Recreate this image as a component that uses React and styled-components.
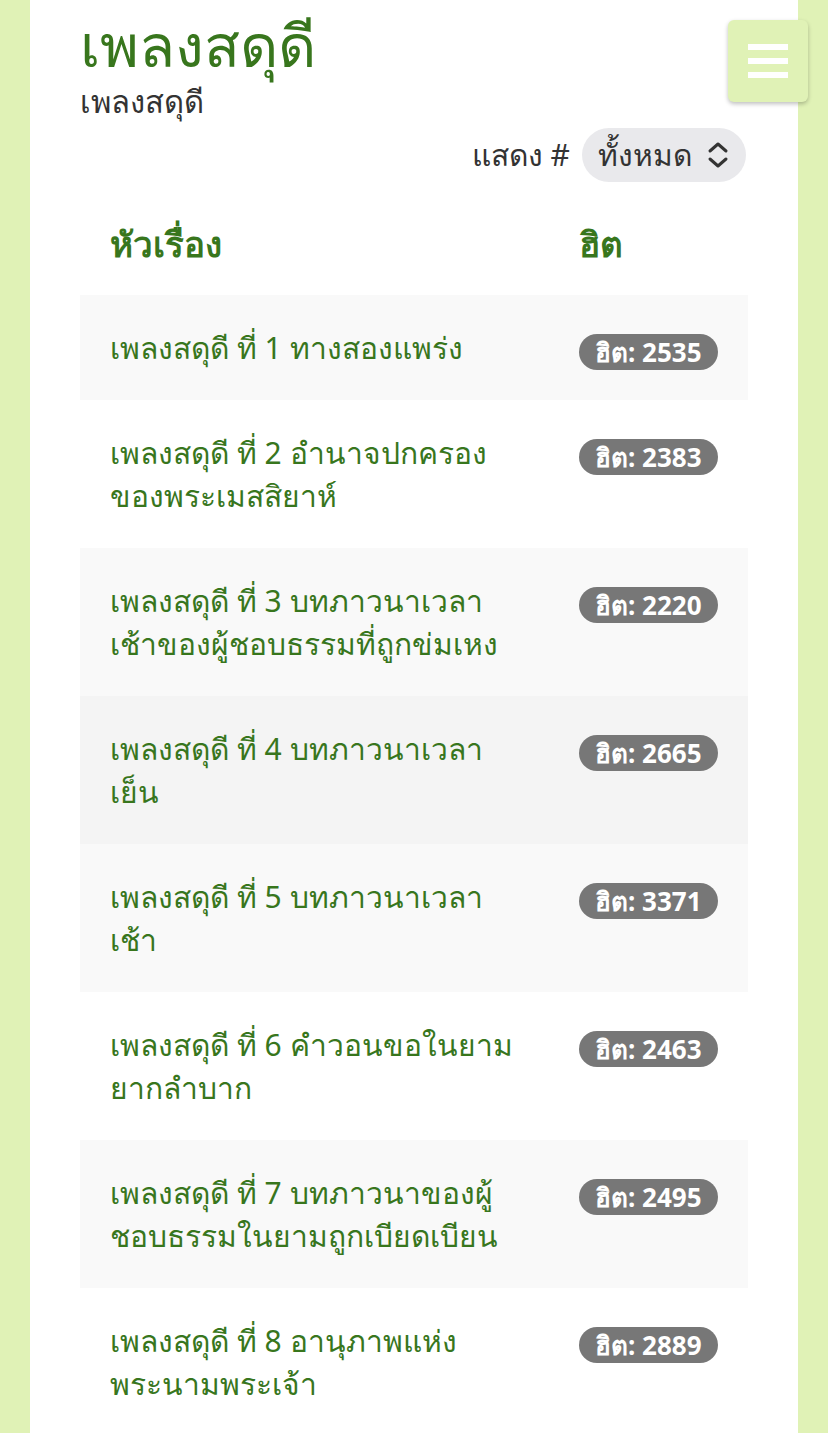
import React from 'react';
import styled, { createGlobalStyle } from 'styled-components';

const GlobalStyle = createGlobalStyle`
  html, body {
    margin: 0;
    padding: 0;
    background: #e0f2b6;
    font-family: "Noto Sans", "DejaVu Sans", sans-serif;
  }
  * { box-sizing: border-box; }
`;

const Page = styled.div`
  margin: 0 30px;
  min-height: 1433px;
  background: #fff;
  padding: 10px 50px 40px;
`;

const Header = styled.header`
  display: flex;
  flex-direction: column;
  gap: 4px;
`;

const Title = styled.h1`
  margin: 0;
  font-size: 59px;
  font-weight: 500;
  line-height: 68px;
  color: #38761d;
`;

const Subtitle = styled.div`
  font-size: 31px;
  line-height: 38px;
  color: #333;
`;

const MenuButton = styled.button`
  position: fixed;
  top: 20px;
  right: 20px;
  width: 80px;
  height: 82px;
  border: none;
  border-radius: 6px;
  background: #e0f2b6;
  box-shadow: 0 2px 4px rgba(0, 0, 0, 0.25);
  display: flex;
  flex-direction: column;
  align-items: center;
  justify-content: center;
  gap: 8px;
  padding: 0;
`;

const Bar = styled.span`
  display: block;
  width: 40px;
  height: 6px;
  background: #fff;
`;

const Filter = styled.div`
  display: flex;
  justify-content: flex-end;
  align-items: center;
  gap: 12px;
  margin-top: 8px;
  font-size: 30px;
  color: #333;
`;

const Select = styled.div`
  display: flex;
  align-items: center;
  gap: 14px;
  height: 54px;
  padding: 0 16px;
  border-radius: 27px;
  background: #e9e9ec;
  color: #333;
  font-size: 30px;
  margin-right: 2px;
`;

const Table = styled.table`
  width: 100%;
  border-collapse: collapse;
  margin-top: 6px;
`;

const HeadCell = styled.th`
  text-align: left;
  padding: 34px 30px 29px;
  font-size: 35px;
  font-weight: 700;
  line-height: 44px;
  color: #38761d;
  width: ${({ $w }) => $w || 'auto'};
`;

const Row = styled.tr`
  background: ${({ $bg }) => $bg};
`;

const Cell = styled.td`
  vertical-align: top;
  padding: 31px 30px;
  font-size: 30px;
  line-height: 43px;
  color: #38761d;
`;

const HitCell = styled(Cell)`
  padding-bottom: 0;
  line-height: 0;
`;

const Badge = styled.span`
  display: inline-block;
  vertical-align: top;
  margin-top: 8px;
  padding: 0 16px;
  height: 36px;
  line-height: 36px;
  border-radius: 18px;
  background: #777;
  color: #fff;
  font-size: 26px;
  font-weight: 700;
  white-space: nowrap;
`;

const songs = [
  { title: 'เพลงสดุดี ที่ 1 ทางสองแพร่ง', hits: 2535 },
  { title: 'เพลงสดุดี ที่ 2 อำนาจปกครองของพระเมสสิยาห์', hits: 2383 },
  { title: 'เพลงสดุดี ที่ 3 บทภาวนาเวลาเช้าของผู้ชอบธรรมที่ถูกข่มเหง', hits: 2220 },
  { title: 'เพลงสดุดี ที่ 4 บทภาวนาเวลาเย็น', hits: 2665 },
  { title: 'เพลงสดุดี ที่ 5 บทภาวนาเวลาเช้า', hits: 3371 },
  { title: 'เพลงสดุดี ที่ 6 คำวอนขอในยามยากลำบาก', hits: 2463 },
  { title: 'เพลงสดุดี ที่ 7 บทภาวนาของผู้ชอบธรรมในยามถูกเบียดเบียน', hits: 2495 },
  { title: 'เพลงสดุดี ที่ 8 อานุภาพแห่งพระนามพระเจ้า', hits: 2889 },
];

const rowColor = (i) => {
  if (i === 3) return '#f4f4f4';
  return i % 2 === 0 ? '#f9f9f9' : '#fff';
};

const Chevrons = () => (
  <svg width="24" height="30" viewBox="0 0 24 30" fill="none" stroke="#333" strokeWidth="3" strokeLinecap="round" strokeLinejoin="round">
    <path d="M4 11 L12 4 L20 11" />
    <path d="M4 19 L12 26 L20 19" />
  </svg>
);

const App = () => (
  <>
    <GlobalStyle />
    <Page>
      <Header>
        <Title>เพลงสดุดี</Title>
        <Subtitle>เพลงสดุดี</Subtitle>
      </Header>
      <Filter>
        แสดง #
        <Select>
          ทั้งหมด
          <Chevrons />
        </Select>
      </Filter>
      <Table>
        <thead>
          <tr>
            <HeadCell>หัวเรื่อง</HeadCell>
            <HeadCell $w="199px">ฮิต</HeadCell>
          </tr>
        </thead>
        <tbody>
          {songs.map((s, i) => (
            <Row key={s.hits + s.title} $bg={rowColor(i)}>
              <Cell>{s.title}</Cell>
              <HitCell>
                <Badge>ฮิต: {s.hits}</Badge>
              </HitCell>
            </Row>
          ))}
        </tbody>
      </Table>
    </Page>
    <MenuButton aria-label="menu">
      <Bar />
      <Bar />
      <Bar />
    </MenuButton>
  </>
);

export default App;
